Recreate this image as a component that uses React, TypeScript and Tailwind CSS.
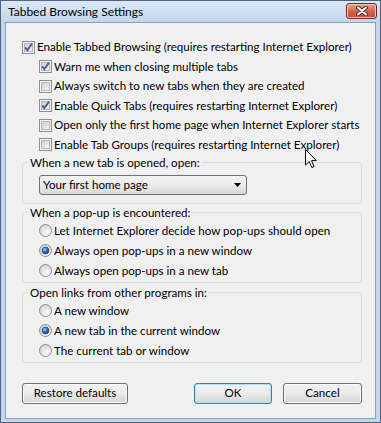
import React from "react";

function CheckBox({ checked }: { readonly checked: boolean }) {
  return (
    <svg width="13" height="13" viewBox="0 0 13 13" className="shrink-0">
      <defs>
        <linearGradient id="cbfill" x1="0" y1="0" x2="1" y2="1">
          <stop offset="0" stopColor="#c9cdd3" />
          <stop offset="1" stopColor="#f7f7f7" />
        </linearGradient>
      </defs>
      <rect x="0.5" y="0.5" width="12" height="12" fill="#f4f4f4" stroke="#8f8f8f" />
      <rect x="2.5" y="2.5" width="8" height="8" fill="url(#cbfill)" stroke="#b4b8bd" />
      {checked && (
        <path d="M3.2 6.4 L5.3 9.2 L10 2.6" fill="none" stroke="#4b5e8c" strokeWidth="1.9" />
      )}
    </svg>
  );
}

function Radio({ checked }: { readonly checked: boolean }) {
  return (
    <svg width="13" height="13" viewBox="0 0 13 13" className="shrink-0">
      <defs>
        <radialGradient id="rbfill" cx="0.65" cy="0.7" r="0.75">
          <stop offset="0" stopColor="#ffffff" />
          <stop offset="1" stopColor="#c9ccd1" />
        </radialGradient>
        <radialGradient id="rbdot" cx="0.4" cy="0.35" r="0.65">
          <stop offset="0" stopColor="#b4e6ff" />
          <stop offset="0.45" stopColor="#2f7fcc" />
          <stop offset="1" stopColor="#173a70" />
        </radialGradient>
      </defs>
      <circle cx="6.5" cy="6.5" r="6" fill="url(#rbfill)" stroke="#8d9197" />
      {checked && <circle cx="6.5" cy="6.5" r="3.4" fill="url(#rbdot)" stroke="#1c3a68" strokeWidth="0.6" />}
    </svg>
  );
}

function CheckRow({ checked, label, className = "" }: { readonly checked: boolean; readonly label: string; readonly className?: string }) {
  return (
    <div className={`flex items-center gap-[2px] whitespace-nowrap ${className}`}>
      <CheckBox checked={checked} />
      <span>{label}</span>
    </div>
  );
}

function RadioRow({ checked, label }: { readonly checked: boolean; readonly label: string }) {
  return (
    <div className="flex h-[20px] items-center gap-[2px] whitespace-nowrap">
      <Radio checked={checked} />
      <span>{label}</span>
    </div>
  );
}

function Button({ label, primary = false, className = "" }: { readonly label: string; readonly primary?: boolean; readonly className?: string }) {
  return (
    <button
      className={`h-[21px] rounded-[3px] border bg-gradient-to-b from-[#f2f2f2] via-[#ebebeb] to-[#d4d4d4] leading-none ${
        primary ? "border-[#3c7fb1] shadow-[inset_0_0_0_1px_#a8e4f8]" : "border-[#707070] shadow-[inset_0_0_0_1px_#fbfbfb]"
      } ${className}`}
    >
      {label}
    </button>
  );
}

export default function App() {
  return (
    <div className="flex h-[423px] w-[381px] flex-col border border-[#4f6480] bg-[#c4d6ec] font-['Lato',sans-serif] text-[12px] text-black">
      {/* title bar */}
      <div className="flex h-[21px] items-start justify-between bg-gradient-to-b from-[#dbe7f5] to-[#c4d6ec]">
        <span className="pl-[7px] pt-[3px] leading-[16px]">Tabbed Browsing Settings</span>
        <div className="mr-[3px] mt-[2px] flex h-[16px] w-[31px] items-center justify-center rounded-[3px] border border-[#6e2b22] bg-gradient-to-b from-[#e9a897] via-[#d0674f] to-[#c24a3a] shadow-[inset_0_0_0_1px_#f2c3b6]">
          <svg width="12" height="10" viewBox="0 0 12 10">
            <path d="M2 1.5 L10 8.5 M10 1.5 L2 8.5" stroke="#5b2520" strokeWidth="4" strokeLinecap="round" />
            <path d="M2 1.5 L10 8.5 M10 1.5 L2 8.5" stroke="#ffffff" strokeWidth="2" strokeLinecap="round" />
          </svg>
        </div>
      </div>

      {/* client area */}
      <div className="relative mx-[4px] mb-[3px] flex flex-1 flex-col border border-[#8ea1b9] bg-[#f0f0f0] text-[11.6px] leading-[16px]">
        <CheckRow checked label="Enable Tabbed Browsing (requires restarting Internet Explorer)" className="ml-[16px] mt-[14px] h-[20px]" />
        <div className="ml-[33px] flex flex-col">
          <CheckRow checked label="Warn me when closing multiple tabs" className="h-[19.5px]" />
          <CheckRow checked={false} label="Always switch to new tabs when they are created" className="h-[19.5px]" />
          <CheckRow checked label="Enable Quick Tabs (requires restarting Internet Explorer)" className="h-[19.5px]" />
          <CheckRow checked={false} label="Open only the first home page when Internet Explorer starts" className="h-[19.5px]" />
          <CheckRow checked={false} label="Enable Tab Groups (requires restarting Internet Explorer)" className="h-[19.5px]" />
        </div>

        <fieldset className="ml-[16px] w-[340px] rounded-[3px] border border-[#d5dfe5] pb-[8px]">
          <legend className="ml-[5px] px-[2px]">When a new tab is opened, open:</legend>
          <div className="ml-[16px] mt-[4px] flex h-[20px] w-[208px] items-center justify-between rounded-[3px] border border-[#707070] bg-gradient-to-b from-[#f3f3f3] via-[#ebebeb] to-[#d8d8d8] pl-[3px] pr-[5px]">
            <span>Your first home page</span>
            <svg width="7" height="4" viewBox="0 0 7 4">
              <path d="M0 0 H7 L3.5 4 Z" fill="#000" />
            </svg>
          </div>
        </fieldset>

        <fieldset className="ml-[16px] mt-[1px] w-[340px] rounded-[3px] border border-[#d5dfe5] pb-[1px]">
          <legend className="ml-[5px] px-[2px]">When a pop-up is encountered:</legend>
          <div className="flex flex-col pl-[16px]">
            <RadioRow checked={false} label="Let Internet Explorer decide how pop-ups should open" />
            <RadioRow checked label="Always open pop-ups in a new window" />
            <RadioRow checked={false} label="Always open pop-ups in a new tab" />
          </div>
        </fieldset>

        <fieldset className="ml-[16px] mt-[2px] w-[340px] rounded-[3px] border border-[#d5dfe5] pb-[1px]">
          <legend className="ml-[5px] px-[2px]">Open links from other programs in:</legend>
          <div className="flex flex-col pl-[16px]">
            <RadioRow checked={false} label="A new window" />
            <RadioRow checked label="A new tab in the current window" />
            <RadioRow checked={false} label="The current tab or window" />
          </div>
        </fieldset>

        <div className="ml-[16px] mt-[20px] flex w-[340px] items-center justify-between">
          <Button label="Restore defaults" className="w-[106px]" />
          <div className="flex gap-[11px]">
            <Button label="OK" primary className="w-[78px]" />
            <Button label="Cancel" className="w-[79px]" />
          </div>
        </div>

        {/* mouse pointer */}
        <svg width="12" height="20" viewBox="0 0 12 20" className="absolute left-[299px] top-[126px]">
          <path d="M0.5 0.5 L0.5 16 L4.2 12.4 L6.8 18.5 L9 17.6 L6.5 11.6 L11.3 11.6 Z" fill="#fff" stroke="#000" strokeLinejoin="round" />
        </svg>
      </div>
    </div>
  );
}
